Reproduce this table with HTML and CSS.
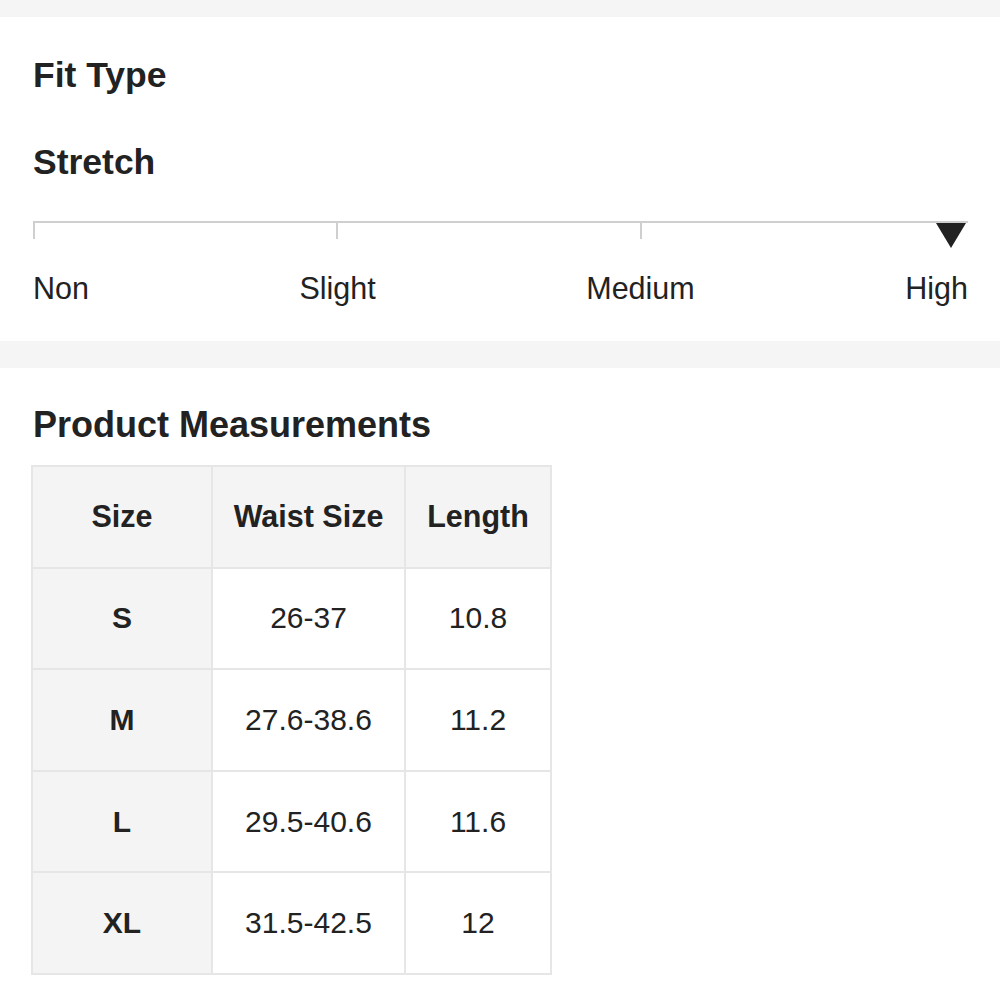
FILE: index.html
```html
<!DOCTYPE html>
<html lang="en">
<head>
    <meta charset="UTF-8">
    <meta name="viewport" content="width=device-width, initial-scale=1.0">
    <title>Fit &amp; Measurements</title>
    <link rel="stylesheet" href="styles.css">
</head>
<body>
    <div class="band"></div>

    <section class="panel fit-panel">
        <h2 class="panel-title">Fit Type</h2>
        <h2 class="panel-title stretch-title">Stretch</h2>

        <div class="scale">
            <div class="scale-track">
                <span class="scale-seg"></span>
                <span class="scale-seg"></span>
                <span class="scale-seg"></span>
                <span class="scale-marker"></span>
            </div>
            <div class="scale-labels">
                <span>Non</span>
                <span>Slight</span>
                <span>Medium</span>
                <span>High</span>
            </div>
        </div>
    </section>

    <div class="band band-mid"></div>

    <section class="panel measure-panel">
        <h2 class="panel-title measure-title">Product Measurements</h2>
        <table class="size-table">
            <colgroup>
                <col class="col-size">
                <col class="col-waist">
                <col class="col-length">
            </colgroup>
            <thead>
                <tr>
                    <th>Size</th>
                    <th>Waist Size</th>
                    <th>Length</th>
                </tr>
            </thead>
            <tbody>
                <tr><th>S</th><td>26-37</td><td>10.8</td></tr>
                <tr><th>M</th><td>27.6-38.6</td><td>11.2</td></tr>
                <tr><th>L</th><td>29.5-40.6</td><td>11.6</td></tr>
                <tr><th>XL</th><td>31.5-42.5</td><td>12</td></tr>
            </tbody>
        </table>
    </section>
</body>
</html>
```

FILE: styles.css
```css
body {
    margin: 0;
    background: #ffffff;
    font-family: "Liberation Sans", Arial, sans-serif;
    color: #222222;
}

.band {
    height: 17px;
    background: #f5f5f5;
}

.band-mid {
    height: 27px;
}

.panel {
    padding: 0 32px 0 33px;
}

.fit-panel {
    padding-top: 38px;
    padding-bottom: 35px;
}

.panel-title {
    margin: 0;
    font-size: 35.5px;
    line-height: 40px;
    font-weight: bold;
    color: #222222;
}

.stretch-title {
    margin-top: 47px;
}

.scale {
    margin-top: 39px;
}

.scale-track {
    position: relative;
    display: grid;
    grid-template-columns: 303px 304px 1fr;
    border-top: 2px solid #cfcfcf;
    height: 16px;
}

.scale-seg {
    border-left: 2px solid #cfcfcf;
}

.scale-marker {
    position: absolute;
    right: 2px;
    top: 0;
    width: 0;
    height: 0;
    border-left: 15.5px solid transparent;
    border-right: 15.5px solid transparent;
    border-top: 25px solid #222222;
}

.scale-labels {
    display: flex;
    justify-content: space-between;
    margin-top: 31px;
    font-size: 30.5px;
    line-height: 36px;
}

.measure-panel {
    padding-top: 37px;
    padding-left: 31px;
}

.measure-title {
    margin-left: 2px;
    font-size: 36px;
}

.size-table {
    margin-top: 20px;
    border-collapse: collapse;
    table-layout: fixed;
    width: 519px;
    border: 2px solid #e6e6e6;
}

.col-size {
    width: 180px;
}

.col-waist {
    width: 193px;
}

.col-length {
    width: 146px;
}

.size-table th,
.size-table td {
    border: 2px solid #e6e6e6;
    height: 99.6px;
    padding: 0;
    text-align: center;
    vertical-align: middle;
    font-size: 30px;
    color: #222222;
}

.size-table th {
    font-weight: bold;
    background: #f4f4f4;
}

.size-table thead th {
    font-size: 30.5px;
}
```
